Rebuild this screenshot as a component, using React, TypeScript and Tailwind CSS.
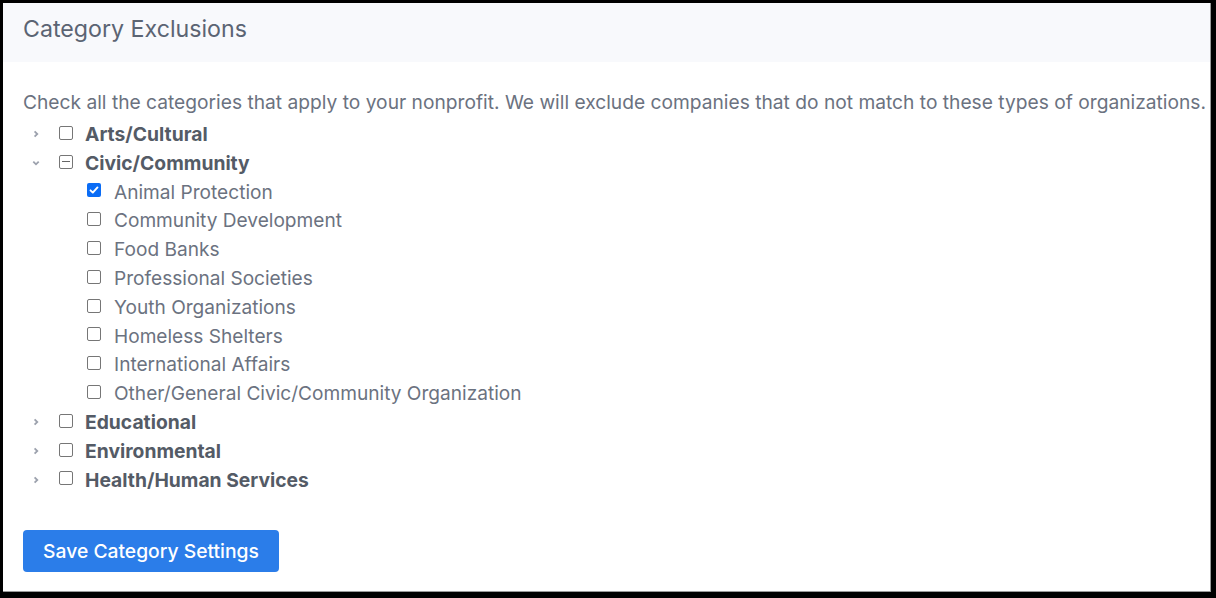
import React from "react";

type Sub = { label: string; checked?: boolean };
type Cat = { label: string; open?: boolean; state?: "none" | "partial"; children?: Sub[] };

const cats: Cat[] = [
  { label: "Arts/Cultural" },
  {
    label: "Civic/Community",
    open: true,
    state: "partial",
    children: [
      { label: "Animal Protection", checked: true },
      { label: "Community Development" },
      { label: "Food Banks" },
      { label: "Professional Societies" },
      { label: "Youth Organizations" },
      { label: "Homeless Shelters" },
      { label: "International Affairs" },
      { label: "Other/General Civic/Community Organization" },
    ],
  },
  { label: "Educational" },
  { label: "Environmental" },
  { label: "Health/Human Services" },
];

function Box({ kind }: { kind: "empty" | "checked" | "partial" }) {
  if (kind === "checked") {
    return (
      <span className="mb-[3px] flex h-[14px] w-[14px] items-center justify-center rounded-[2px] bg-[#0a6cf5]">
        <svg width="12" height="12" viewBox="0 0 12 12">
          <path d="M2.5 6.3 L4.8 8.6 L9.5 3.4" stroke="white" strokeWidth="1.9" fill="none" strokeLinecap="round" strokeLinejoin="round" />
        </svg>
      </span>
    );
  }
  return (
    <span className="mb-[3px] flex h-[14px] w-[14px] items-center justify-center rounded-[2px] border border-[#767676] bg-white">
      {kind === "partial" && <span className="h-[1.5px] w-[8px] bg-[#666]" />}
    </span>
  );
}

function Chevron({ open }: { open?: boolean }) {
  return (
    <svg width="10" height="10" viewBox="0 0 10 10" className="text-[#9ca1ad]">
      {open ? (
        <path d="M2.3 3.6 L5 6.3 L7.7 3.6" stroke="currentColor" strokeWidth="1.8" fill="none" />
      ) : (
        <path d="M3.6 2.3 L6.3 5 L3.6 7.7" stroke="currentColor" strokeWidth="1.8" fill="none" />
      )}
    </svg>
  );
}

export default function App() {
  return (
    <div
      className="h-[598px] w-[1216px] bg-black pb-[6px] pl-[3px] pr-[5px] pt-[3px]"
      style={{ fontFamily: "Inter, 'Liberation Sans', sans-serif" }}
    >
      <div className="flex h-full w-full flex-col bg-white border-r border-b border-[#9a9a9a]">
        <div className="flex h-[59px] items-center bg-[#f8f9fc] px-[20px] pb-[8px]">
          <h1 className="text-[23.2px] font-normal leading-[28px] text-[#5b6473]">Category Exclusions</h1>
        </div>
        <div className="px-[20px] pt-[26px]">
          <p className="whitespace-nowrap text-[19.2px] leading-[28px] text-[#6b7280]">
            Check all the categories that apply to your nonprofit. We will exclude companies that do not match to these types of organizations.
          </p>
          <ul className="mt-[4px]">
            {cats.map((c) => (
              <li key={c.label}>
                <div className="flex h-[28.8px] items-center">
                  <span className="ml-[8px] flex w-[28px]">
                    <Chevron open={c.open} />
                  </span>
                  <Box kind={c.state === "partial" ? "partial" : "empty"} />
                  <span className="ml-[12px] text-[19.3px] font-bold text-[#545b66]">{c.label}</span>
                </div>
                {c.open && c.children && (
                  <ul>
                    {c.children.map((s) => (
                      <li key={s.label} className="flex h-[28.8px] items-center pl-[64px]">
                        <Box kind={s.checked ? "checked" : "empty"} />
                        <span className="ml-[13px] text-[19.1px] text-[#6b7280]">{s.label}</span>
                      </li>
                    ))}
                  </ul>
                )}
              </li>
            ))}
          </ul>
          <button className="mt-[36px] flex h-[42px] w-[256px] items-center justify-center rounded-[4px] bg-[#2b7de9] text-[19.3px] font-medium text-white">
            Save Category Settings
          </button>
        </div>
      </div>
    </div>
  );
}
